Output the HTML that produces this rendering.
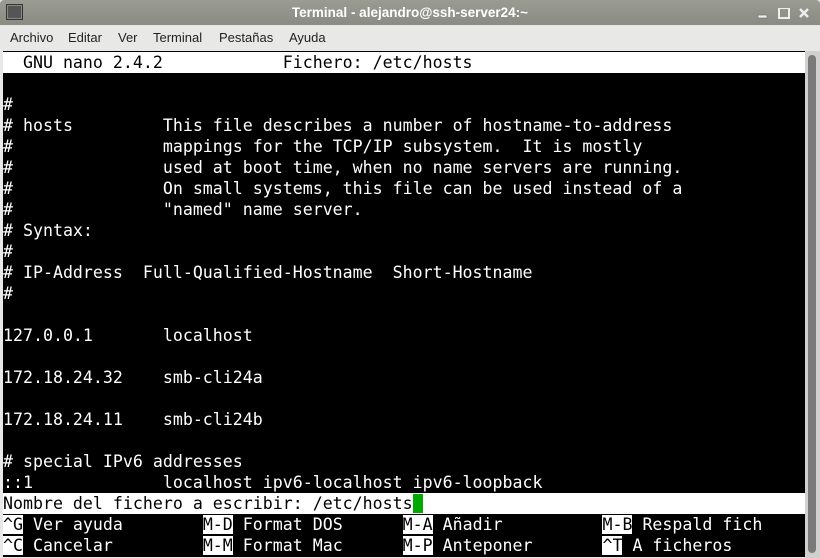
<!DOCTYPE html>
<html><head><meta charset="utf-8"><style>
*{margin:0;padding:0;box-sizing:border-box}
body{width:820px;height:558px;overflow:hidden;background:#e8e8e6;position:relative;font-family:"Liberation Sans","DejaVu Sans",sans-serif}
#title{position:absolute;left:0;top:0;width:820px;height:25px;background:linear-gradient(#9a9c94,#8a8c84);border-radius:4px 4px 0 0;color:#fff;font-size:13.5px;font-weight:bold;text-align:center;line-height:25px}
#icon{position:absolute;left:6px;top:4px;width:17px;height:16px;background:#555;border:1px solid #333;box-shadow:inset 0 0 0 1px #888}
#menu{position:absolute;top:25px;left:0;width:820px;height:26px;font-size:13px;color:#222;line-height:26px}
#menu span{position:absolute}
#term{position:absolute;left:3px;top:51px;width:802px;height:506px;background:#000;overflow:hidden;border-top:1px solid #000}
.r{position:absolute;left:0;height:21px;width:802px;white-space:pre;font-family:"DejaVu Sans Mono","Liberation Mono",monospace;font-size:16.6px;line-height:21px;color:#fff}
.inv{background:#fff;color:#000}
.k{background:#fff;color:#000}
#sb{position:absolute;left:805px;top:51px;width:15px;height:507px;background:#d0d0ce}
#thumb{position:absolute;left:3px;top:4px;width:8px;height:498px;background:#7a7a7a;border-radius:4px}
.cur{background:#0a0;color:#0a0}
</style></head><body>
<div id="title"><div id="icon"></div>Terminal - alejandro@ssh-server24:~
<svg style="position:absolute;left:756px;top:8px" width="60" height="12"><rect x="2" y="7" width="9" height="3" fill="#eee" stroke="#666" stroke-width=".6"/><rect x="23" y="0" width="10" height="10" fill="none" stroke="#eee" stroke-width="2"/><path d="M44 1l8 8M52 1l-8 8" stroke="#eee" stroke-width="2.4"/></svg></div>
<div id="menu"><span style="left:10px">Archivo</span><span style="left:68px">Editar</span><span style="left:118px">Ver</span><span style="left:153px">Terminal</span><span style="left:219px">Pestañas</span><span style="left:289px">Ayuda</span></div>
<div id="term">
<div class="r inv" style="top:0">  GNU nano 2.4.2            Fichero: /etc/hosts</div>
<div class="r" style="top:42px">#</div>
<div class="r" style="top:63px"># hosts         This file describes a number of hostname-to-address</div>
<div class="r" style="top:84px">#               mappings for the TCP/IP subsystem.  It is mostly</div>
<div class="r" style="top:105px">#               used at boot time, when no name servers are running.</div>
<div class="r" style="top:126px">#               On small systems, this file can be used instead of a</div>
<div class="r" style="top:147px">#               "named" name server.</div>
<div class="r" style="top:168px"># Syntax:</div>
<div class="r" style="top:189px">#</div>
<div class="r" style="top:210px"># IP-Address  Full-Qualified-Hostname  Short-Hostname</div>
<div class="r" style="top:231px">#</div>
<div class="r" style="top:273px">127.0.0.1       localhost</div>
<div class="r" style="top:315px">172.18.24.32    smb-cli24a</div>
<div class="r" style="top:357px">172.18.24.11    smb-cli24b</div>
<div class="r" style="top:399px"># special IPv6 addresses</div>
<div class="r" style="top:420px">::1             localhost ipv6-localhost ipv6-loopback</div>
<div class="r inv" style="top:441px">Nombre del fichero a escribir: /etc/hosts<span class="cur"> </span></div>
<div class="r" style="top:462px"><span class="k">^G</span> Ver ayuda        <span class="k">M-D</span> Format DOS      <span class="k">M-A</span> Añadir          <span class="k">M-B</span> Respald fich</div>
<div class="r" style="top:483px"><span class="k">^C</span> Cancelar         <span class="k">M-M</span> Format Mac      <span class="k">M-P</span> Anteponer       <span class="k">^T</span> A ficheros</div>
</div>
<div id="sb"><div id="thumb"></div></div>
</body></html>
